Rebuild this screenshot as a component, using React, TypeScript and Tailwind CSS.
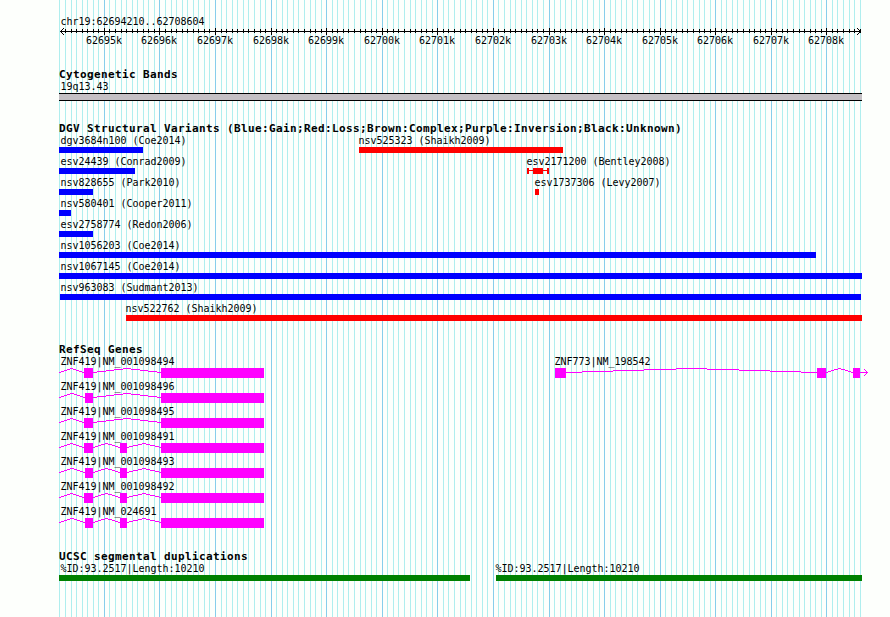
import type { ReactNode } from "react";

const REGION = { chrom: "chr19", start: 62694210, end: 62708604 };
const PX_PER_BP = 800 / (REGION.end - REGION.start + 1);

const toX = (bp: number) => Math.round(60 + (bp - REGION.start) * PX_PER_BP);

type Tick = { bp: number; x: number; major: boolean };

const TICKS: Tick[] = [];
for (let bp = 62694200; bp <= 62708600; bp += 100) {
  TICKS.push({ bp, x: toX(bp), major: bp % 1000 === 0 });
}

type Feature = {
  name: string;
  start: number;
  end: number;
  color: string;
  labelX?: number;
  inner?: [number, number];
};

const BLUE = "bg-[#0000ff]";
const RED = "bg-[#ff0000]";
const GREEN = "bg-[#008000]";

const VARIANTS: Feature[][] = [
  [
    { name: "dgv3684n100 (Coe2014)", start: 59, end: 143, color: BLUE },
    { name: "nsv525323 (Shaikh2009)", start: 359, end: 563, color: RED, labelX: 358.5 },
  ],
  [
    { name: "esv24439 (Conrad2009)", start: 59, end: 135, color: BLUE },
    { name: "esv2171200 (Bentley2008)", start: 527, end: 549, color: RED, labelX: 526.5, inner: [533, 543] },
  ],
  [
    { name: "nsv828655 (Park2010)", start: 59, end: 93, color: BLUE },
    { name: "esv1737306 (Levy2007)", start: 535, end: 539, color: RED, labelX: 534.5 },
  ],
  [{ name: "nsv580401 (Cooper2011)", start: 59, end: 71, color: BLUE }],
  [{ name: "esv2758774 (Redon2006)", start: 59, end: 93, color: BLUE }],
  [{ name: "nsv1056203 (Coe2014)", start: 59, end: 816, color: BLUE }],
  [{ name: "nsv1067145 (Coe2014)", start: 59, end: 862, color: BLUE }],
  [{ name: "nsv963083 (Sudmant2013)", start: 60, end: 861, color: BLUE }],
  [{ name: "nsv522762 (Shaikh2009)", start: 126, end: 862, color: RED, labelX: 125.5 }],
];

const DUPLICATIONS: Feature[][] = [
  [
    { name: "%ID:93.2517|Length:10210", start: 59, end: 470, color: GREEN },
    { name: "%ID:93.2517|Length:10210", start: 496, end: 862, color: GREEN, labelX: 495.5 },
  ],
];

type Gene = { name: string; exons: [number, number][] };

const GENES: Gene[] = [
  { name: "ZNF419|NM_001098494", exons: [[84, 93], [161, 264]] },
  { name: "ZNF419|NM_001098496", exons: [[85, 93], [161, 264]] },
  { name: "ZNF419|NM_001098495", exons: [[84, 93], [161, 264]] },
  { name: "ZNF419|NM_001098491", exons: [[84, 93], [120, 127], [161, 264]] },
  { name: "ZNF419|NM_001098493", exons: [[85, 93], [120, 127], [161, 264]] },
  { name: "ZNF419|NM_001098492", exons: [[84, 93], [120, 127], [161, 264]] },
  { name: "ZNF419|NM_024691", exons: [[85, 93], [120, 127], [161, 264]] },
];

// one pixel high steps that climb to the middle of the intron and back down
function intronPath(from: number, to: number) {
  const step = (to - from) / 8;
  const rows = [4, 3, 2, 1, 0, 1, 2, 3, 4];
  const edges = [0, 0.5, 1.5, 2.5, 3.5, 4.5, 5.5, 6.5, 7.5, 8];
  return rows
    .map((row, i) => {
      const a = Math.round(from + edges[i] * step);
      const b = Math.round(from + edges[i + 1] * step);
      return `M${a} ${row}h${b - a}v1h${a - b}z`;
    })
    .join("");
}

function Lane({ children }: { children: ReactNode }) {
  return <div className="grid grid-cols-[890px]">{children}</div>;
}

function Label({ x = 60.5, children }: { x?: number; children: ReactNode }) {
  return (
    <span
      className="col-start-1 row-start-1 h-3 justify-self-start whitespace-pre text-[10px] leading-[11px] tracking-[-0.02px]"
      style={{ marginLeft: x }}
    >
      {children}
    </span>
  );
}

function Title({ children }: { children: ReactNode }) {
  return (
    <h2 className="ml-[59px] h-3.5 whitespace-pre text-[11px] font-bold leading-[15px] tracking-[0.378px]">
      {children}
    </h2>
  );
}

function Gridlines() {
  return (
    <svg className="absolute inset-0" width="890" height="617" shapeRendering="crispEdges">
      {TICKS.map((t) => (
        <rect key={t.bp} x={t.x} y="0" width="1" height="617" fill={t.major ? "#87ceeb" : "#afeeee"} />
      ))}
    </svg>
  );
}

function Ruler() {
  return (
    <div className="pt-4">
      <Lane>
        <Label>{`${REGION.chrom}:${REGION.start}..${REGION.end}`}</Label>
      </Lane>
      <svg className="block" width="890" height="7" shapeRendering="crispEdges">
        <rect x="60" y="3" width="801" height="1" />
        {TICKS.slice(1).map((t) => (
          <rect key={t.bp} x={t.x} y={t.major ? 0 : 1} width="1" height={t.major ? 7 : 4} />
        ))}
        <path d="M61 2h1v-1h1v-1h1v1h-1v1h-1v1h-1zM61 4h1v1h1v1h1v1h-1v-1h-1v-1h-1z" />
        <path d="M860 3h-1v-1h-1v-1h-1v-1h1v1h1v1h1zM860 4h-1v1h-1v1h-1v1h1v-1h1v-1h1z" />
      </svg>
      <Lane>
        {TICKS.filter((t) => t.major).map((t) => (
          <Label key={t.bp} x={t.x - 18}>{`${t.bp / 1000}k`}</Label>
        ))}
      </Lane>
    </div>
  );
}

function FeatureBar({ feature: f }: { feature: Feature }) {
  const style = { marginLeft: f.start, width: f.end - f.start };

  if (f.inner) {
    return (
      <div className="col-start-1 row-start-1 flex h-1.5 items-center" style={style}>
        <div className={`h-1.5 w-0.5 ${f.color}`} />
        <div className={`mb-px h-px flex-1 ${f.color}`} />
        <div className={`h-1.5 ${f.color}`} style={{ width: f.inner[1] - f.inner[0] }} />
        <div className={`mb-px h-px flex-1 ${f.color}`} />
        <div className={`h-1.5 w-0.5 ${f.color}`} />
      </div>
    );
  }

  return <div className={`col-start-1 row-start-1 h-1.5 ${f.color}`} style={style} />;
}

function FeatureTrack({ title, rows }: { title: string; rows: Feature[][] }) {
  return (
    <section>
      <Title>{title}</Title>
      {rows.map((row, i) => (
        <div key={i} className="h-[21px]">
          <Lane>
            {row.map((f) => (
              <Label key={f.start} x={f.labelX}>{f.name}</Label>
            ))}
          </Lane>
          <Lane>
            {row.map((f) => (
              <FeatureBar key={f.start} feature={f} />
            ))}
          </Lane>
        </div>
      ))}
    </section>
  );
}

function Exons({ exons, from }: Pick<Gene, "exons"> & { from?: number }) {
  return (
    <>
      {exons.map(([a, b], i) => {
        const prev = i === 0 ? from : exons[i - 1][1];
        return (
          <g key={a}>
            {prev !== undefined && <path d={intronPath(prev, a)} />}
            <rect x={a} y="0" width={b - a} height="10" />
          </g>
        );
      })}
    </>
  );
}

function GeneTrack() {
  return (
    <section>
      <Title>RefSeq Genes</Title>
      {GENES.map((g, i) => (
        <div key={g.name} className="h-[25px]">
          <Lane>
            <Label>{g.name}</Label>
            {i === 0 && <Label x={554.5}>ZNF773|NM_198542</Label>}
          </Lane>
          <svg className="block" width="890" height="10" fill="#ff00ff" shapeRendering="crispEdges">
            <Exons exons={g.exons} from={59} />
            {i === 0 && (
              <>
                <Exons exons={[[555, 566], [817, 826], [853, 860]]} />
                <path d="M860 4h8v1h-8zM866 3h1v1h-1zM865 2h1v1h-1zM864 1h1v1h-1zM866 5h1v1h-1zM865 6h1v1h-1zM864 7h1v1h-1z" />
              </>
            )}
          </svg>
        </div>
      ))}
    </section>
  );
}

export default function App() {
  return (
    <main className="relative h-[617px] w-[890px] overflow-hidden bg-[#fdfffc] font-['DejaVu_Sans_Mono',monospace] text-black">
      <Gridlines />
      <div className="relative flex flex-col">
        <Ruler />
        <section className="mt-5">
          <Title>Cytogenetic Bands</Title>
          <Lane>
            <Label>19q13.43</Label>
          </Lane>
          <div className="ml-[59px] h-2 w-[803px] border-y border-black bg-[#c4c0c4]" />
        </section>
        <div className="mt-5">
          <FeatureTrack title="DGV Structural Variants (Blue:Gain;Red:Loss;Brown:Complex;Purple:Inversion;Black:Unknown)" rows={VARIANTS} />
        </div>
        <div className="mt-[18px]">
          <GeneTrack />
        </div>
        <div className="mt-[18px]">
          <FeatureTrack title="UCSC segmental duplications" rows={DUPLICATIONS} />
        </div>
      </div>
    </main>
  );
}
